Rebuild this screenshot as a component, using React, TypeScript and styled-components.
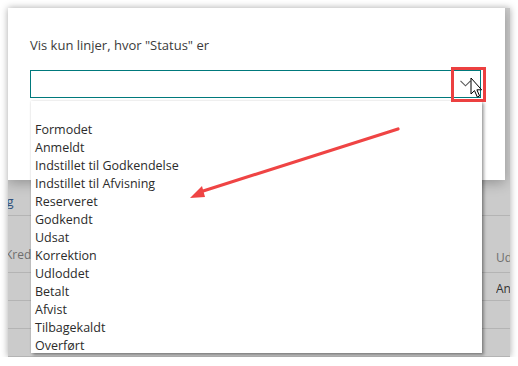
import styled, { createGlobalStyle } from 'styled-components';

const GlobalStyle = createGlobalStyle`
  html, body {
    margin: 0;
    padding: 0;
    background: #ffffff;
  }
  body {
    font-family: "Open Sans", "Noto Sans", Arial, sans-serif;
  }
`;

const Frame = styled.div`
  position: relative;
  margin: 8px 0 0 8px;
  width: 502px;
  height: 349px;
  overflow: hidden;
  background: #cbcbcb;
  box-shadow: 0 0 7px rgba(0, 0, 0, 0.35);
`;

/* the dimmed page behind the dialog */
const Page = styled.div`
  display: flex;
  flex-direction: column;
  color: #4a4a4a;
  font-size: 12px;
`;

const Covered = styled.div`
  height: 172px;
`;

const Toolbar = styled.div`
  height: 36px;
  display: flex;
  align-items: center;
  padding-top: 6px;
  border-bottom: 1px solid #b4b4b4;
  box-sizing: border-box;
  overflow: hidden;
`;

const ToolbarLabel = styled.span`
  margin-left: -38px;
  color: #2f4f7a;
  font-size: 13px;
  white-space: nowrap;
`;

const Row = styled.div<{ $header?: boolean }>`
  display: grid;
  grid-template-columns: 488px 1fr;
  height: ${p => (p.$header ? 57 : 28)}px;
  align-items: ${p => (p.$header ? 'end' : 'center')};
  padding-bottom: ${p => (p.$header ? 6 : 0)}px;
  padding-top: ${p => (p.$header ? 0 : 4)}px;
  box-sizing: border-box;
  border-bottom: 1px solid #b4b4b4;
  color: ${p => (p.$header ? '#6e6e6e' : '#333333')};
  white-space: nowrap;
  overflow: hidden;
`;

const Cell = styled.span<{ $shift?: number; $lift?: number }>`
  margin-left: ${p => p.$shift ?? 0}px;
  margin-bottom: ${p => p.$lift ?? 0}px;
  overflow: hidden;
`;

const Dialog = styled.div`
  position: absolute;
  left: 0;
  top: 0;
  width: 497px;
  height: 172px;
  background: #ffffff;
  box-shadow: 0 3px 12px rgba(0, 0, 0, 0.28);
  padding: 28px 24px 0 22px;
  box-sizing: border-box;
`;

const Prompt = styled.div`
  font-size: 13px;
  color: #3b3b3b;
  line-height: 18px;
`;

const Field = styled.div`
  position: relative;
  margin-top: 16px;
  width: 451px;
  height: 28px;
  box-sizing: border-box;
  border: 1.5px solid #00797c;
`;

const Chevron = styled.svg`
  position: absolute;
  right: 9px;
  top: 9px;
`;

const Popup = styled.ul`
  position: absolute;
  left: 0;
  top: calc(100% + 4px);
  width: 451px;
  height: 252px;
  margin: 0;
  padding: 2px 0 0;
  box-sizing: border-box;
  list-style: none;
  background: #ffffff;
  box-shadow: 2px 2px 3px rgba(0, 0, 0, 0.35), 0 0 2px rgba(0, 0, 0, 0.15);
  z-index: 2;
`;

const Option = styled.li`
  height: 18px;
  line-height: 18px;
  padding-left: 4px;
  font-size: 12.5px;
  color: #2b2b2b;
`;

const Highlight = styled.div`
  position: absolute;
  left: 443px;
  top: 59px;
  width: 35px;
  height: 35px;
  box-sizing: border-box;
  border: 3px solid #ec4040;
  z-index: 3;
`;

const Overlay = styled.svg`
  position: absolute;
  left: 0;
  top: 0;
  z-index: 4;
  pointer-events: none;
`;

const statuses = [
  '',
  'Formodet',
  'Anmeldt',
  'Indstillet til Godkendelse',
  'Indstillet til Afvisning',
  'Reserveret',
  'Godkendt',
  'Udsat',
  'Korrektion',
  'Udloddet',
  'Betalt',
  'Afvist',
  'Tilbagekaldt',
  'Overført',
];

const App = () => {
  return (
    <>
      <GlobalStyle />
      <Frame>
        <Page>
          <Covered />
          <Toolbar>
            <ToolbarLabel>Visning</ToolbarLabel>
          </Toolbar>
          <Row $header>
            <Cell $shift={-3} $lift={3}>Kreditor</Cell>
            <Cell>Udbetalt</Cell>
          </Row>
          <Row>
            <Cell />
            <Cell>Anmeldt</Cell>
          </Row>
          <Row>
            <Cell />
            <Cell />
          </Row>
          <Row>
            <Cell />
            <Cell />
          </Row>
        </Page>

        <Dialog>
          <Prompt>Vis kun linjer, hvor "Status" er</Prompt>
          <Field>
            <Chevron width="11" height="7" viewBox="0 0 11 7">
              <path d="M0.5 0.8 L5.5 5.8 L10.5 0.8" fill="none" stroke="#5a5a5a" strokeWidth="1.1" />
            </Chevron>
            <Popup>
              {statuses.map((s, i) => (
                <Option key={i}>{s || '\u00a0'}</Option>
              ))}
            </Popup>
          </Field>
        </Dialog>

        <Highlight />

        <Overlay width="502" height="349" viewBox="0 0 502 349">
          {/* annotation arrow */}
          <line x1="390" y1="121" x2="192" y2="184" stroke="#ef4444" strokeWidth="3.2" strokeLinecap="round" />
          <polygon points="182,190 194,178 197,189" fill="#ef4444" />
          {/* mouse pointer */}
          <path
            d="M463 70 L463 86 L466.5 82.6 L469.3 89 L471.6 88 L468.9 81.8 L473.6 81.8 Z"
            fill="#ffffff"
            stroke="#000000"
            strokeWidth="1"
            strokeLinejoin="round"
          />
        </Overlay>
      </Frame>
    </>
  );
};

export default App;
